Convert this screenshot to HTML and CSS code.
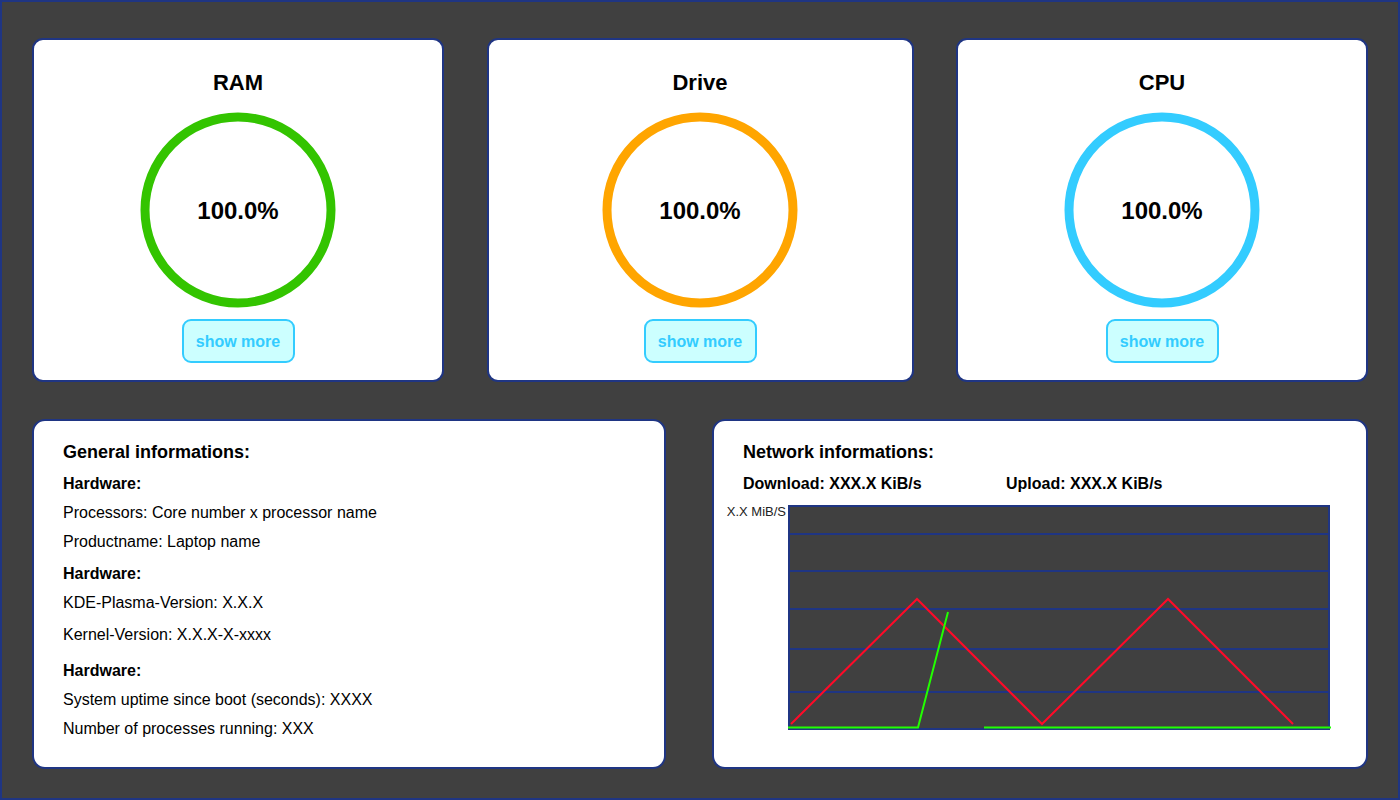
FILE: index.html
```html
<!DOCTYPE html>
<html>
<head>
<meta charset="utf-8">
<link rel="stylesheet" href="styles.css">
</head>
<body>
<main class="dash">
  <section class="row top">
    <div class="card gauge-card w-side">
      <h2 class="gauge-title">RAM</h2>
      <div class="gauge">
        <svg width="200" height="200" viewBox="0 0 200 200"><circle cx="100" cy="100" r="93" fill="none" stroke="#33c400" stroke-width="9"/></svg>
        <span class="gauge-value">100.0%</span>
      </div>
      <button class="more">show more</button>
    </div>
    <div class="card gauge-card w-mid">
      <h2 class="gauge-title">Drive</h2>
      <div class="gauge">
        <svg width="200" height="200" viewBox="0 0 200 200"><circle cx="100" cy="100" r="93" fill="none" stroke="#ffa500" stroke-width="9"/></svg>
        <span class="gauge-value">100.0%</span>
      </div>
      <button class="more">show more</button>
    </div>
    <div class="card gauge-card w-side">
      <h2 class="gauge-title">CPU</h2>
      <div class="gauge">
        <svg width="200" height="200" viewBox="0 0 200 200"><circle cx="100" cy="100" r="93" fill="none" stroke="#33ccff" stroke-width="9"/></svg>
        <span class="gauge-value">100.0%</span>
      </div>
      <button class="more">show more</button>
    </div>
  </section>
  <section class="row bottom">
    <div class="card info-card general">
      <h3 class="info-title">General informations:</h3>
      <p class="sub">Hardware:</p>
      <p class="line">Processors: Core number x processor name</p>
      <p class="line">Productname: Laptop name</p>
      <p class="sub gap3">Hardware:</p>
      <p class="line">KDE-Plasma-Version: X.X.X</p>
      <p class="line gap3">Kernel-Version: X.X.X-X-xxxx</p>
      <p class="sub gap7">Hardware:</p>
      <p class="line">System uptime since boot (seconds): XXXX</p>
      <p class="line">Number of processes running: XXX</p>
    </div>
    <div class="card info-card network">
      <h3 class="info-title">Network informations:</h3>
      <div class="rates">
        <p class="sub rate">Download: XXX.X KiB/s</p>
        <p class="sub">Upload: XXX.X KiB/s</p>
      </div>
      <div class="chart-row">
        <span class="axis">X.X MiB/S</span>
        <svg class="chart" width="544" height="226" viewBox="0 0 544 226">
          <rect x="1" y="1" width="540" height="223" fill="#404040" stroke="#1f3583" stroke-width="2"/>
          <g stroke="#1f3583" stroke-width="2.2">
            <line x1="1" y1="29" x2="541" y2="29"/>
            <line x1="1" y1="66" x2="541" y2="66"/>
            <line x1="1" y1="104" x2="541" y2="104"/>
            <line x1="1" y1="144" x2="541" y2="144"/>
            <line x1="1" y1="187" x2="541" y2="187"/>
          </g>
          <polyline points="3,219 129,94 254,219 380,94 505,219" fill="none" stroke="#ff0a28" stroke-width="2"/>
          <polyline points="0,222.5 130,222.5 160,107" fill="none" stroke="#22ff00" stroke-width="2"/>
          <line x1="196" y1="222.5" x2="543" y2="222.5" stroke="#22ff00" stroke-width="2"/>
        </svg>
      </div>
    </div>
  </section>
</main>
</body>
</html>
```

FILE: styles.css
```css
html, body {
  margin: 0;
  padding: 0;
}
body {
  width: 1400px;
  height: 800px;
  box-sizing: border-box;
  background: #404040;
  border: 2px solid #1f3583;
  font-family: "Liberation Sans", Arial, sans-serif;
  color: #000;
  overflow: hidden;
}
.dash {
  padding: 36px 30px 0 30px;
  display: flex;
  flex-direction: column;
  gap: 37px;
}
.row {
  display: flex;
  justify-content: space-between;
}
.card {
  background: #fff;
  border: 2px solid #1f3583;
  border-radius: 11px;
  box-sizing: border-box;
}
.gauge-card {
  height: 344px;
  display: flex;
  flex-direction: column;
  align-items: center;
}
.w-side { width: 412px; }
.w-mid { width: 427px; }
.gauge-title {
  margin: 31px 0 0 0;
  font-size: 22px;
  line-height: 24px;
  font-weight: bold;
}
.gauge {
  position: relative;
  width: 200px;
  height: 200px;
  margin-top: 15px;
}
.gauge svg { display: block; }
.gauge-value {
  position: absolute;
  left: 0;
  right: 0;
  top: 2px;
  bottom: 0;
  display: flex;
  align-items: center;
  justify-content: center;
  font-size: 24px;
  font-weight: bold;
}
.more {
  margin-top: 9px;
  width: 113px;
  height: 44px;
  background: #ccffff;
  border: 2px solid #33ccff;
  border-radius: 9px;
  color: #33ccff;
  font-family: "Liberation Sans", Arial, sans-serif;
  font-size: 16px;
  font-weight: bold;
  padding: 2px 0 0 0;
}
.info-card {
  height: 350px;
  padding: 17px 29px;
  border-radius: 13px;
}
.general { width: 634px; }
.network { width: 656px; }
.info-title {
  margin: 0 0 2px 0;
  font-size: 18px;
  line-height: 29px;
  font-weight: bold;
}
.sub {
  margin: 0;
  font-size: 16px;
  line-height: 29px;
  font-weight: bold;
}
.line {
  margin: 0;
  font-size: 16px;
  line-height: 29px;
}
.gap3 { margin-top: 3px; }
.gap7 { margin-top: 7px; }
.rates {
  display: flex;
}
.rate { width: 263px; }
.chart-row {
  display: flex;
  align-items: flex-start;
  margin-top: 7px;
  margin-left: -19px;
}
.axis {
  width: 62px;
  text-align: right;
  font-size: 13px;
  line-height: 14px;
  color: #222;
  margin-right: 2px;
  white-space: nowrap;
}
.chart {
  display: block;
  overflow: visible;
}
```
